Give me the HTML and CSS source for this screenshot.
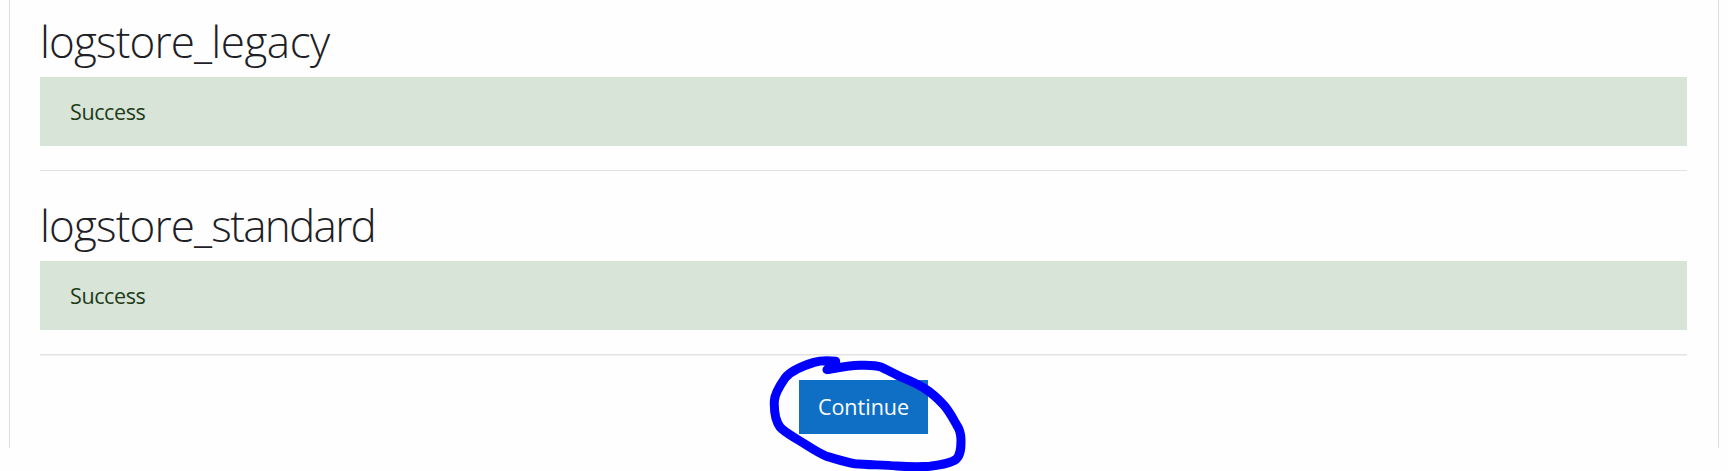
FILE: index.html
```html
<!DOCTYPE html>
<html lang="en">
<head>
<meta charset="utf-8">
<title>Plugins check</title>
<link rel="stylesheet" href="styles.css">
</head>
<body>
<main class="card">
  <section class="plugin">
    <h3 class="plugin-name">logstore_<span class="legacy">legacy</span></h3>
    <div class="alert">Success</div>
    <hr class="rule">
  </section>
  <section class="plugin">
    <h3 class="plugin-name">logstore_<span class="standard">standard</span></h3>
    <div class="alert">Success</div>
    <hr class="rule rule-last">
  </section>
  <div class="actions">
    <button class="continue" type="button">Continue</button>
    <svg class="marker" width="240" height="131" viewBox="0 0 720 393" aria-hidden="true">
      <path d="M257 64 C235 61 212 61 192 67 C160 77 120 95 106 113 C92 133 74 160 73 183 C72 212 77 243 90 261 C103 276 125 287 145 300 C176 319 202 338 230 349 C258 357 285 367 315 371 C350 374 400 375 440 378 C480 381 515 381 540 379 C570 375 602 370 618 358 C633 345 633 322 633 300 C633 280 628 266 619 253 C608 234 597 213 582 196 C563 175 541 156 520 143 C500 131 478 121 456 112 C435 103 413 90 395 82 C378 76 355 75 330 76 C295 77 265 83 231 89 L257 67"/>
    </svg>
  </div>
</main>
</body>
</html>
```
FILE: styles.css
```css
* { box-sizing: border-box; }

body {
  margin: 0;
  height: 471px;
  overflow: hidden;
  background: #fefefe;
  color: #1d2125;
  font-family: "Open Sans", "Noto Sans", sans-serif;
}

.card {
  width: 1710px;
  height: 448px;
  margin-left: 9px;
  padding: 0 31px 0 30px;
  border: solid #dedede;
  border-width: 0 1px;
}

.plugin {
  padding-top: 14px;
}

.plugin + .plugin {
  padding-top: 27px;
}

.plugin-name {
  height: 54px;
  margin: 0 0 9px;
  font-size: 44px;
  font-weight: 300;
  line-height: 54px;
  letter-spacing: -0.85px;
  white-space: nowrap;
}

.legacy {
  letter-spacing: -0.5px;
}

.standard {
  letter-spacing: -1.7px;
}

.alert {
  height: 69px;
  padding: 0 30px;
  background: #d8e4d7;
  color: #1c3b19;
  font-size: 21.5px;
  letter-spacing: -0.4px;
  line-height: 69px;
}

.rule {
  height: 1px;
  margin: 24px 0 0;
  border: 0;
  background: #e2e2e2;
}

.rule-last {
  height: 2px;
  border-bottom: 1px solid #efefef;
}

.actions {
  position: relative;
  display: flex;
  padding: 24px 0 0 759px;
}

.continue {
  width: 129px;
  height: 54px;
  padding: 0;
  border: 0;
  background: #0f6fc5;
  color: #fff;
  font: 21.5px/54px "Open Sans", "Noto Sans", sans-serif;
}

.marker {
  position: absolute;
  left: 710px;
  top: -16px;
}

.marker path {
  fill: none;
  stroke: #00f;
  stroke-width: 27;
  stroke-linecap: round;
  stroke-linejoin: round;
}
```
